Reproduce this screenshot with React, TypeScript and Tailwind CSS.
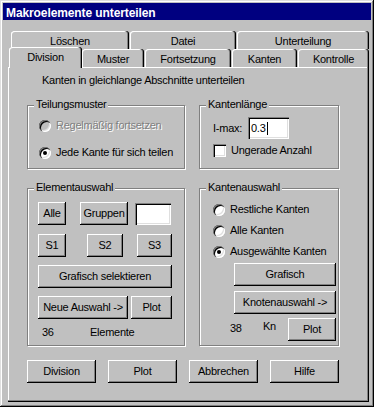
import type { ReactNode } from "react";

// Win95 bevels
const raised = "bg-[#c0c0c0] shadow-[inset_-1px_-1px_#000,inset_1px_1px_#fff,inset_-2px_-2px_#808080]";
const sunken = "bg-white shadow-[inset_1px_1px_#808080,inset_2px_2px_#000,inset_-1px_-1px_#fff,inset_-2px_-2px_#dfdfdf]";
const tabEdge = "bg-[#c0c0c0] rounded-t-[3px] shadow-[inset_-1px_0_#000,inset_-2px_0_#808080,inset_1px_1px_#fff]";

function Btn({ w, children, className = "" }: { w: string; children: ReactNode; className?: string }) {
  return (
    <div className={`${w} h-[23px] shrink-0 flex items-center justify-center ${raised} ${className}`}>
      {children}
    </div>
  );
}

function Group({ label, w, h, className = "", children }: { label: string; w: string; h: string; className?: string; children: ReactNode }) {
  return (
    <div
      className={`relative ${w} ${h} shrink-0 border border-[#808080] shadow-[1px_1px_0_#fff,inset_1px_1px_0_#fff] ${className}`}
    >
      <span className="absolute -top-[8px] left-[6px] bg-[#c0c0c0] px-[2px]">{label}</span>
      {children}
    </div>
  );
}

function Radio({ checked = false, disabled = false, label, className = "" }: { checked?: boolean; disabled?: boolean; label: string; className?: string }) {
  return (
    <div className={`flex h-[13px] items-center ${className}`}>
      <span
        className={`flex h-[12px] w-[12px] shrink-0 items-center justify-center rounded-full shadow-[inset_1px_1px_#808080,inset_2px_2px_#000,inset_-1px_-1px_#fff,inset_-2px_-2px_#dfdfdf] ${
          disabled ? "bg-[#c0c0c0]" : "bg-white"
        }`}
      >
        {checked && <span className="h-[4px] w-[4px] rounded-full bg-black" />}
      </span>
      <span className={`ml-[5px] ${disabled ? "text-[#808080] [text-shadow:1px_1px_0_#fff]" : ""}`}>{label}</span>
    </div>
  );
}

export default function App() {
  return (
    <div className="h-[407px] w-[374px] overflow-hidden bg-[#c0c0c0] p-[3px] font-['Liberation_Sans',Arial,sans-serif] text-[11px] leading-[13px] tracking-[-0.25px] text-black shadow-[inset_-1px_-1px_#000,inset_1px_1px_#dfdfdf,inset_-2px_-2px_#808080,inset_2px_2px_#fff]">
      <div className="h-[17px] bg-[#000080] pl-[3px] pt-[3px] text-[12px] font-bold leading-[14px] tracking-[-0.1px] text-white">
        Makroelemente unterteilen
      </div>

      <div className="pl-[5px]">
        {/* back tab row */}
        <div className="ml-[3px] mt-[11px] flex h-[16px] gap-[1px]">
          <div className={`w-[118px] h-[18px] pt-[4px] text-center ${tabEdge}`}>Löschen</div>
          <div className={`w-[106px] h-[18px] pt-[4px] text-center ${tabEdge}`}>Datei</div>
          <div className={`w-[132px] h-[18px] pt-[4px] text-center ${tabEdge}`}>Unterteilung</div>
        </div>

        {/* front tab row */}
        <div className="relative z-10 flex h-[20px] items-end">
          <div className={`relative z-10 -mb-px ml-[1px] h-[21px] w-[73px] pt-[4px] text-center ${tabEdge}`}>Division</div>
          <div className={`h-[18px] w-[62px] pt-[4px] text-center ${tabEdge}`}>Muster</div>
          <div className={`ml-[1px] h-[18px] w-[86px] pt-[4px] text-center ${tabEdge}`}>Fortsetzung</div>
          <div className={`ml-[1px] h-[18px] w-[65px] pt-[4px] text-center ${tabEdge}`}>Kanten</div>
          <div className={`ml-[1px] h-[18px] w-[71px] pt-[4px] text-center ${tabEdge}`}>Kontrolle</div>
        </div>

        {/* panel */}
        <div className="h-[335px] w-[361px] pt-[7px] shadow-[inset_-1px_-1px_#000,inset_-2px_-2px_#808080,inset_1px_1px_#fff]">
          <p className="pl-[34px]">Kanten in gleichlange Abschnitte unterteilen</p>

          <div className="ml-[19px] mt-[18px] flex">
            <Group label="Teilungsmuster" w="w-[158px]" h="h-[64px]">
              <div className="pl-[11px] pt-[13px]">
                <Radio disabled label="Regelmäßig fortsetzen" />
                <Radio checked label="Jede Kante für sich teilen" className="mt-[14px]" />
              </div>
            </Group>
            <Group label="Kantenlänge" w="w-[140px]" h="h-[64px]" className="ml-[14px]">
              <div className="pl-[13px] pt-[11px]">
                <div className="flex h-[22px] items-center">
                  <span className="w-[35px]">I-max:</span>
                  <div className={`flex h-[22px] w-[41px] items-center pl-[3px] ${sunken}`}>
                    0.3<span className="ml-[1px] h-[13px] w-px bg-black" />
                  </div>
                </div>
                <div className="mt-[5px] flex h-[13px] items-center">
                  <span className={`h-[13px] w-[13px] shrink-0 ${sunken}`} />
                  <span className="ml-[5px]">Ungerade Anzahl</span>
                </div>
              </div>
            </Group>
          </div>

          <div className="ml-[19px] mt-[19px] flex">
            <Group label="Elementauswahl" w="w-[158px]" h="h-[158px]">
              <div className="pl-[10px] pt-[13px]">
                <div className="flex items-center">
                  <Btn w="w-[28px]">Alle</Btn>
                  <Btn w="w-[48px]" className="ml-[14px]">Gruppen</Btn>
                  <div className={`ml-[7px] h-[22px] w-[36px] ${sunken}`} />
                </div>
                <div className="mt-[9px] flex">
                  <Btn w="w-[28px]">S1</Btn>
                  <Btn w="w-[36px]" className="ml-[21px]">S2</Btn>
                  <Btn w="w-[35px]" className="ml-[14px]">S3</Btn>
                </div>
                <Btn w="w-[134px]" className="mt-[8px]">Grafisch selektieren</Btn>
                <div className="mt-[8px] flex">
                  <Btn w="w-[90px]">Neue Auswahl -&gt;</Btn>
                  <Btn w="w-[41px]" className="ml-[3px]">Plot</Btn>
                </div>
                <div className="mt-[7px] flex">
                  <span className="w-[52px] pl-[4px]">36</span>
                  <span>Elemente</span>
                </div>
              </div>
            </Group>
            <Group label="Kantenauswahl" w="w-[140px]" h="h-[158px]" className="ml-[14px]">
              <div className="pl-[13px] pt-[14px]">
                <Radio label="Restliche Kanten" />
                <Radio label="Alle Kanten" className="mt-[8px]" />
                <Radio checked label="Ausgewählte Kanten" className="mt-[8px]" />
              </div>
              <div className="pl-[34px]">
                <Btn w="w-[102px]" className="mt-[5px]">Grafisch</Btn>
                <Btn w="w-[102px]" className="mt-[5px]">Knotenauswahl -&gt;</Btn>
              </div>
              <div className="mt-[4px] flex pl-[29px]">
                <span className="mt-[4px] w-[34px] pl-[1px]">38</span>
                <span className="mt-[2px] w-[25px]">Kn</span>
                <Btn w="w-[48px]">Plot</Btn>
              </div>
            </Group>
          </div>

          <div className="ml-[19px] mt-[14px] flex gap-[12px]">
            <Btn w="w-[69px]">Division</Btn>
            <Btn w="w-[69px]">Plot</Btn>
            <Btn w="w-[69px]">Abbrechen</Btn>
            <Btn w="w-[69px]">Hilfe</Btn>
          </div>
        </div>
      </div>
    </div>
  );
}
